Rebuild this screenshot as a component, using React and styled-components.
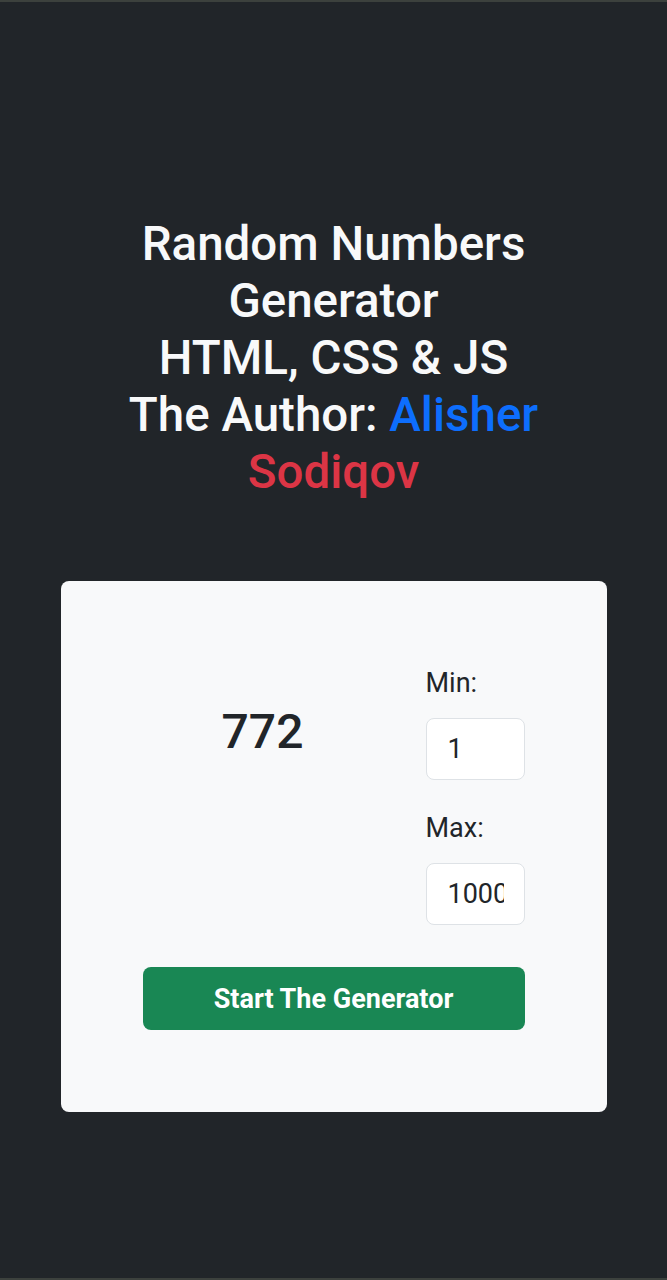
import React from "react";
import styled, { createGlobalStyle } from "styled-components";

const Global = createGlobalStyle`
  html, body { margin: 0; padding: 0; }
  body {
    background: #212529;
    font-family: Roboto, "Liberation Sans", Arial, sans-serif;
    color: #212529;
  }
  * { box-sizing: border-box; }
`;

const Page = styled.div`
  min-height: 1280px;
  border-top: 2px solid #3c413d;
  border-bottom: 2px solid #3c413d;
  display: flex;
  flex-direction: column;
  align-items: center;
  padding-top: 214px;
`;

const Title = styled.h1`
  margin: 0;
  width: 440px;
  text-align: center;
  color: #f8f9fa;
  font-size: 47.5px;
  font-weight: 500;
  line-height: 57px;
`;

const Accent = styled.span`
  color: ${(p) => p.$color};
`;

const Card = styled.div`
  margin-top: 80px;
  width: 546px;
  background: #f8f9fa;
  border-radius: 8px;
  padding: 82px 82px;
  display: flex;
  flex-direction: column;
`;

const Row = styled.div`
  display: grid;
  grid-template-columns: 240px 1fr;
  column-gap: 43px;
`;

const Result = styled.div`
  font-size: 48px;
  font-weight: 500;
  color: #212529;
  text-align: center;
  padding-top: 40px;
  line-height: 1.2;
`;

const Fields = styled.div`
  display: flex;
  flex-direction: column;
`;

const Label = styled.label`
  font-size: 27px;
  line-height: 40px;
  color: #212529;
  margin-top: ${(p) => (p.$first ? "0" : "28px")};
`;

const Input = styled.input`
  margin-top: 15px;
  width: 99px;
  height: 62px;
  border: 1px solid #dee2e6;
  border-radius: 8px;
  background: #fff;
  padding: 0 20px 0 21px;
  font-family: Roboto, "Liberation Sans", Arial, sans-serif;
  font-size: 27px;
  color: #212529;
  outline: none;
`;

const Button = styled.button`
  margin-top: 42px;
  height: 63px;
  width: 100%;
  border: none;
  border-radius: 8px;
  background: #198754;
  color: #fff;
  font-family: Roboto, "Liberation Sans", Arial, sans-serif;
  font-size: 27px;
  font-weight: 700;
  padding-top: 2px;
  cursor: pointer;
`;

export default function App() {
  return (
    <>
      <Global />
      <Page>
        <Title>
          Random Numbers Generator
          <br />
          HTML, CSS &amp; JS
          <br />
          The Author: <Accent $color="#0d6efd">Alisher</Accent>{" "}
          <Accent $color="#dc3545">Sodiqov</Accent>
        </Title>
        <Card>
          <Row>
            <Result>772</Result>
            <Fields>
              <Label $first>Min:</Label>
              <Input type="text" defaultValue="1" />
              <Label>Max:</Label>
              <Input type="text" defaultValue="1000" />
            </Fields>
          </Row>
          <Button>Start The Generator</Button>
        </Card>
      </Page>
    </>
  );
}
